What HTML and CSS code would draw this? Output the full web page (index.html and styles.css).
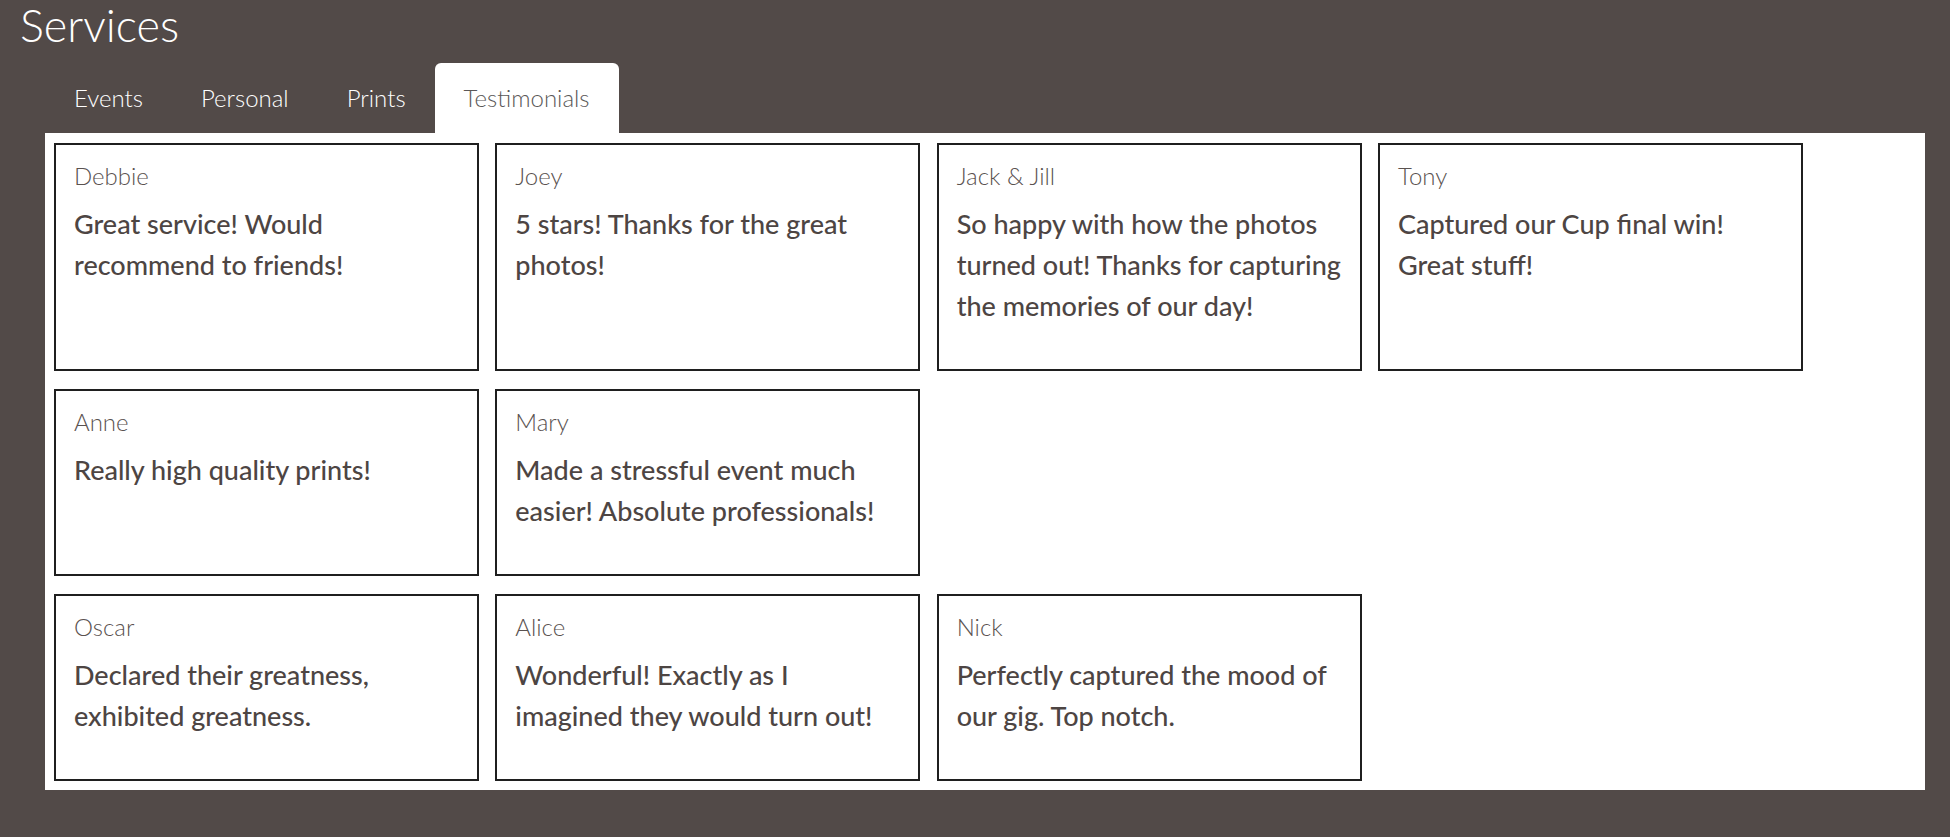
FILE: index.html
```html
<!DOCTYPE html>
<html lang="en">
<head>
<meta charset="utf-8">
<title>Services</title>
<link rel="stylesheet" href="styles.css">
</head>
<body>
<header class="page-head">
  <h1 class="page-title">Services</h1>
</header>
<main class="services">
  <nav class="tabs">
    <a class="tab">Events</a>
    <a class="tab">Personal</a>
    <a class="tab">Prints</a>
    <a class="tab tab-active">Testimonials</a>
  </nav>
  <section class="panel">
    <div class="grid">
      <article class="card"><h2 class="name">Debbie</h2><p class="quote">Great service! Would<br>recommend to friends!</p></article>
      <article class="card"><h2 class="name">Joey</h2><p class="quote">5 stars! Thanks for the great<br>photos!</p></article>
      <article class="card"><h2 class="name">Jack &amp; Jill</h2><p class="quote">So happy with how the photos<br>turned out! Thanks for capturing<br>the memories of our day!</p></article>
      <article class="card"><h2 class="name">Tony</h2><p class="quote">Captured our Cup final win!<br>Great stuff!</p></article>
      <article class="card"><h2 class="name">Anne</h2><p class="quote">Really high quality prints!</p></article>
      <article class="card"><h2 class="name">Mary</h2><p class="quote">Made a stressful event much<br>easier! Absolute professionals!</p></article>
      <div class="spacer"></div>
      <div class="spacer"></div>
      <article class="card"><h2 class="name">Oscar</h2><p class="quote">Declared their greatness,<br>exhibited greatness.</p></article>
      <article class="card"><h2 class="name">Alice</h2><p class="quote">Wonderful! Exactly as I<br>imagined they would turn out!</p></article>
      <article class="card"><h2 class="name">Nick</h2><p class="quote">Perfectly captured the mood of<br>our gig. Top notch.</p></article>
    </div>
  </section>
</main>
</body>
</html>
```
FILE: styles.css
```css
html, body {
  margin: 0;
  padding: 0;
}
body {
  background: #524a48;
  font-family: Lato, "Noto Sans", sans-serif;
  color: #4d4543;
  min-height: 837px;
}
.page-head {
  padding: 0 0 0 20px;
}
.page-title {
  margin: 0;
  font-family: Lato, sans-serif;
  font-weight: 300;
  font-size: 45px;
  line-height: 50px;
  color: #ffffff;
}
.services {
  margin: 13px 25px 0 45px;
}
.tabs {
  display: flex;
  height: 70px;
}
.tab {
  display: block;
  padding: 0 29px;
  height: 70px;
  line-height: 70px;
  font-weight: 300;
  font-size: 24px;
  color: #ffffff;
  border-radius: 6px 6px 0 0;
}
.tab-active {
  background: #ffffff;
  color: #5a5858;
}
.panel {
  background: #ffffff;
  padding: 10px 9px 9px 9px;
}
.grid {
  display: grid;
  grid-template-columns: repeat(4, 425px);
  column-gap: 16.33px;
  row-gap: 18px;
  align-items: start;
}
.card {
  border: 2px solid #1f1f1f;
  padding: 16px 8px 43px 18px;
  height: 100%;
  box-sizing: border-box;
}
.name {
  margin: 0;
  font-weight: 300;
  font-size: 24px;
  line-height: 30px;
  color: #5a5250;
}
.quote {
  margin: 12px 0 0;
  font-weight: 500;
  font-size: 27px;
  line-height: 41px;
  color: #4d4543;
  white-space: nowrap;
}
```
